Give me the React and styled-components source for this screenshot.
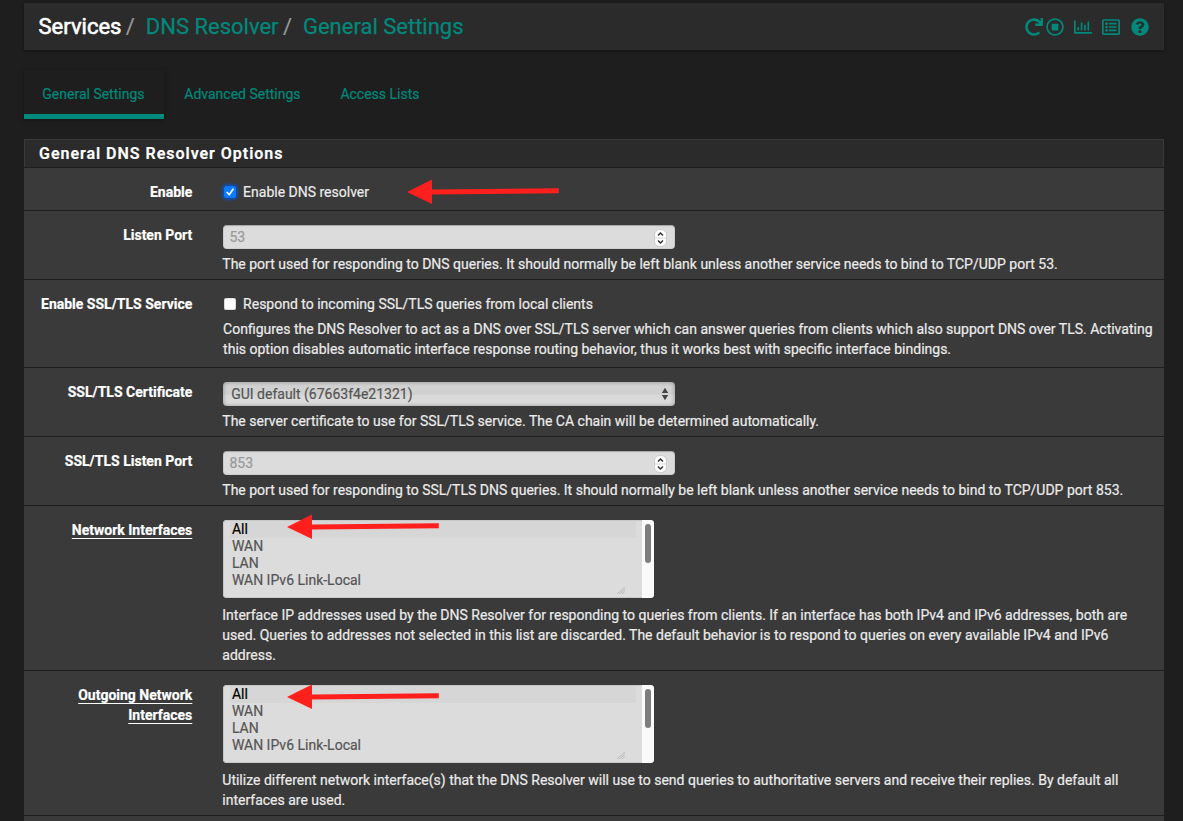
import React from "react";
import styled, { createGlobalStyle, css } from "styled-components";
import { FaRedo, FaRegStopCircle, FaRegChartBar, FaRegListAlt, FaQuestionCircle } from "react-icons/fa";

const GlobalStyle = createGlobalStyle`
  * { box-sizing: border-box; }
  html, body { margin: 0; background: #1e1e1e; overflow: hidden; }
  body {
    font-family: Roboto, "Liberation Sans", sans-serif;
    font-size: 14px;
    line-height: 20px;
    color: #ebebeb;
    -webkit-text-stroke: 0.2px;
  }
`;

const Page = styled.div`
  height: 821px;
  padding: 3px 19px 0 24px;
  overflow: hidden;
`;

const Header = styled.header`
  display: flex;
  align-items: center;
  justify-content: space-between;
  height: 47px;
  padding: 0 15.5px 0 14.5px;
  background: #2b2b2b;
  box-shadow: 0 1px 3px rgba(0, 0, 0, 0.4);
`;

const Breadcrumb = styled.ol`
  display: flex;
  margin: 0;
  padding: 0;
  list-style: none;
  font-size: 22px;
  line-height: 30px;
`;

const Crumb = styled.li`
  color: ${(p) => (p.$root ? "#fff" : "#00897b")};
  -webkit-text-stroke: ${(p) => (p.$root ? "0.6px" : "0.25px")};
`;

const Slash = styled.li`
  width: 24.4px;
  padding-left: 4.4px;
  color: #999;
`;

const Actions = styled.div`
  display: flex;
  gap: 10.2px;
  color: #00897b;
  font-size: 18px;
  svg { display: block; }
  svg:first-child { margin-right: -7px; }
`;

const Tabs = styled.nav`
  display: flex;
  margin-top: 20px;
`;

const Tab = styled.a`
  height: 49px;
  width: ${(p) => p.$w}px;
  padding: 14px 0 0 ${(p) => p.$pad}px;
  color: #00897b;
  white-space: nowrap;
  ${(p) => p.$active && css`
    border-bottom: 5px solid #00897b;
    box-shadow: 0 1px 5px rgba(0, 0, 0, 0.35);
  `}
`;

const Panel = styled.section`
  margin-top: 20px;
  background: #3a3a3a;
`;

const PanelTitle = styled.h2`
  height: 28px;
  margin: 0;
  padding: 4px 14px;
  border: 1px solid #3a3a3a;
  border-bottom: 0;
  background: #2b2b2b;
  color: #fff;
  font-size: 16px;
  font-weight: 600;
  line-height: 20px;
  letter-spacing: 0.98px;
`;

const Row = styled.div`
  position: relative;
  display: grid;
  grid-template-columns: 168.3px 1fr;
  column-gap: 30px;
  height: ${(p) => p.$h}px;
  padding-top: 14px;
  border-top: 1px solid #1e1e1e;
`;

const Label = styled.div`
  color: #fff;
  font-weight: 700;
  text-align: right;
  white-space: pre-line;
`;

const LabelText = styled.span`
  ${(p) => p.$underlined && css`
    text-decoration: underline;
    text-decoration-thickness: 1px;
    text-decoration-skip-ink: none;
    text-underline-offset: 3px;
  `}
`;

const Field = styled.div`
  min-width: 0;
`;

const CheckLine = styled.label`
  display: flex;
  align-items: center;
  height: 20px;
  padding-left: 1.6px;
`;

const CheckBox = styled.span`
  display: flex;
  flex: none;
  width: 12px;
  height: 12px;
  margin-right: 7.2px;
  border-radius: 2.5px;
  background: ${(p) => (p.$on ? "#0a7aff" : "#fff")};
  box-shadow: ${(p) => (p.$on ? "0 0 0 2.5px #1e4688" : "inset 0 0 0 0.5px #bbb")};
`;

const Help = styled.div`
  margin-top: ${(p) => p.$top}px;
  padding-left: ${(p) => p.$indent || 0}px;
  white-space: pre;
`;

const Control = styled.div`
  display: flex;
  align-items: center;
  justify-content: space-between;
  width: 452px;
  height: 24px;
  margin: 0 0 0 0.5px;
  padding: 0 7px 0 6.6px;
  border-radius: 4px;
  background: #dcdcdc;
  box-shadow: inset 0 1px 1px rgba(0, 0, 0, 0.2), inset 0 0 0 1px rgba(0, 0, 0, 0.06);
  color: #999;
  ${(p) => p.$select && css`
    padding: 0 6px 0 8.4px;
    background: linear-gradient(#d2d2d2, #d0d0d0 50%, #d8d8d8 55%, #dedede);
    box-shadow: inset 0 0 4px rgba(0, 0, 0, 0.35);
    color: #555;
  `}
`;

const Stepper = styled.svg`
  display: block;
  width: 13px;
  height: 18px;
  margin: 1px 0.5px 0 0;
`;

const SelectArrows = styled.svg`
  display: block;
  width: 8px;
  height: 14px;
`;

const ListBox = styled.div`
  display: grid;
  grid-template-columns: 1fr 12px;
  width: 431px;
  height: 78px;
  margin-left: 0.5px;
  overflow: hidden;
  border-radius: 4px;
  background: #dcdcdc;
  box-shadow: inset 0 0 0 1px #c8c8c8;
`;

const Options = styled.div`
  position: relative;
  padding: 1px 6px 0 7px;
`;

const Option = styled.div`
  height: 17px;
  padding-left: 2.1px;
  line-height: 17px;
  color: ${(p) => (p.$selected ? "#000" : "#555")};
  background: ${(p) => (p.$selected ? "#d6d6d6" : "transparent")};
`;

const Grip = styled.svg`
  position: absolute;
  right: 17px;
  bottom: 4px;
  width: 8px;
  height: 7px;
`;

const Scrollbar = styled.div`
  padding: 4px 0 0 3px;
  background: #fafafa;
`;

const Thumb = styled.div`
  width: 6px;
  height: 39px;
  border-radius: 3px;
  background: #7d7d7d;
`;

const Pointer = styled.svg`
  position: absolute;
  left: ${(p) => p.$x}px;
  top: ${(p) => p.$y}px;
  width: 152px;
  height: 26px;
`;

const PointerArrow = ({ x, y }) => (
  <Pointer $x={x} $y={y} viewBox="0 0 152 26" aria-hidden="true">
    <path d="M0 13 25 .5V10.500L151.800 9.200V14.200L25 15.500V25Z" fill="#ff1f1c" />
  </Pointer>
);

const NumberField = ({ value }) => (
  <Control>
    <span>{value}</span>
    <Stepper viewBox="0 0 13 18">
      <rect x=".6" y=".6" width="11.800" height="16.800" rx="5" fill="#fff" stroke="#bbb" strokeWidth=".7" />
      <path d="M1 9H12" stroke="#d5d5d5" />
      <path d="M4 6.500 6.500 4 9 6.500M4 11.500 6.500 14 9 11.500" fill="none" stroke="#333" strokeWidth="1.500" />
    </Stepper>
  </Control>
);

const InterfaceList = () => (
  <ListBox>
    <Options>
      {["All", "WAN", "LAN", "WAN IPv6 Link-Local"].map((name, i) => (
        <Option key={name} $selected={i === 0}>{name}</Option>
      ))}
      <Grip viewBox="0 0 8 7">
        <path d="M0 7 8 0M2.500 7 8 2.200M5 7 8 4.400" stroke="#bababa" fill="none" />
      </Grip>
    </Options>
    <Scrollbar><Thumb /></Scrollbar>
  </ListBox>
);

const FormRow = ({ label, height, underlined, children }) => (
  <Row $h={height}>
    <Label><LabelText $underlined={underlined}>{label}</LabelText></Label>
    {children}
  </Row>
);

export default function App() {
  return (
    <Page>
      <GlobalStyle />
      <Header>
        <Breadcrumb>
          <Crumb $root>Services</Crumb>
          <Slash>/</Slash>
          <Crumb>DNS Resolver</Crumb>
          <Slash>/</Slash>
          <Crumb>General Settings</Crumb>
        </Breadcrumb>
        <Actions>
          <FaRedo />
          <FaRegStopCircle />
          <FaRegChartBar />
          <FaRegListAlt />
          <FaQuestionCircle />
        </Actions>
      </Header>
      <Tabs>
        <Tab $active $w={140} $pad={18.3}>General Settings</Tab>
        <Tab $w={156} $pad={20.3}>Advanced Settings</Tab>
        <Tab $w={120} $pad={20.4}>Access Lists</Tab>
      </Tabs>
      <Panel>
        <PanelTitle>General DNS Resolver Options</PanelTitle>
        <FormRow label="Enable" height={43}>
          <Field>
            <CheckLine>
              <CheckBox $on>
                <svg width="12" height="12" viewBox="0 0 12 12">
                  <path d="M3 6.300 5.200 8.700 9 3.200" fill="none" stroke="#fff" strokeWidth="1.600" strokeLinecap="round" strokeLinejoin="round" />
                </svg>
              </CheckBox>
              Enable DNS resolver
            </CheckLine>
          </Field>
          <PointerArrow x={383} y={11} />
        </FormRow>
        <FormRow label="Listen Port" height={69}>
          <Field>
            <NumberField value="53" />
            <Help $top={5}>The port used for responding to DNS queries. It should normally be left blank unless another service needs to bind to TCP/UDP port 53.</Help>
          </Field>
        </FormRow>
        <FormRow label="Enable SSL/TLS Service" height={88}>
          <Field>
            <CheckLine><CheckBox />Respond to incoming SSL/TLS queries from local clients</CheckLine>
            <Help $top={5} $indent={0.8}>{"Configures the DNS Resolver to act as a DNS over SSL/TLS server which can answer queries from clients which also support DNS over TLS. Activating\nthis option disables automatic interface response routing behavior, thus it works best with specific interface bindings."}</Help>
          </Field>
        </FormRow>
        <FormRow label="SSL/TLS Certificate" height={69}>
          <Field>
            <Control $select>
              <span>GUI default (67663f4e21321)</span>
              <SelectArrows viewBox="0 0 8 14">
                <path d="M4 .7 7.200 6H.8ZM.8 8H7.200L4 13.300Z" fill="#444" />
              </SelectArrows>
            </Control>
            <Help $top={5}>The server certificate to use for SSL/TLS service. The CA chain will be determined automatically.</Help>
          </Field>
        </FormRow>
        <FormRow label="SSL/TLS Listen Port" height={69}>
          <Field>
            <NumberField value="853" />
            <Help $top={5}>The port used for responding to SSL/TLS DNS queries. It should normally be left blank unless another service needs to bind to TCP/UDP port 853.</Help>
          </Field>
        </FormRow>
        <FormRow label="Network Interfaces" height={165} underlined>
          <Field>
            <InterfaceList />
            <Help $top={7}>{"Interface IP addresses used by the DNS Resolver for responding to queries from clients. If an interface has both IPv4 and IPv6 addresses, both are\nused. Queries to addresses not selected in this list are discarded. The default behavior is to respond to queries on every available IPv4 and IPv6\naddress."}</Help>
          </Field>
          <PointerArrow x={263} y={8} />
        </FormRow>
        <FormRow label={"Outgoing Network\nInterfaces"} height={145} underlined>
          <Field>
            <InterfaceList />
            <Help $top={7}>{"Utilize different network interface(s) that the DNS Resolver will use to send queries to authoritative servers and receive their replies. By default all\ninterfaces are used."}</Help>
          </Field>
          <PointerArrow x={263} y={13} />
        </FormRow>
        <Row $h={20} />
      </Panel>
    </Page>
  );
}
